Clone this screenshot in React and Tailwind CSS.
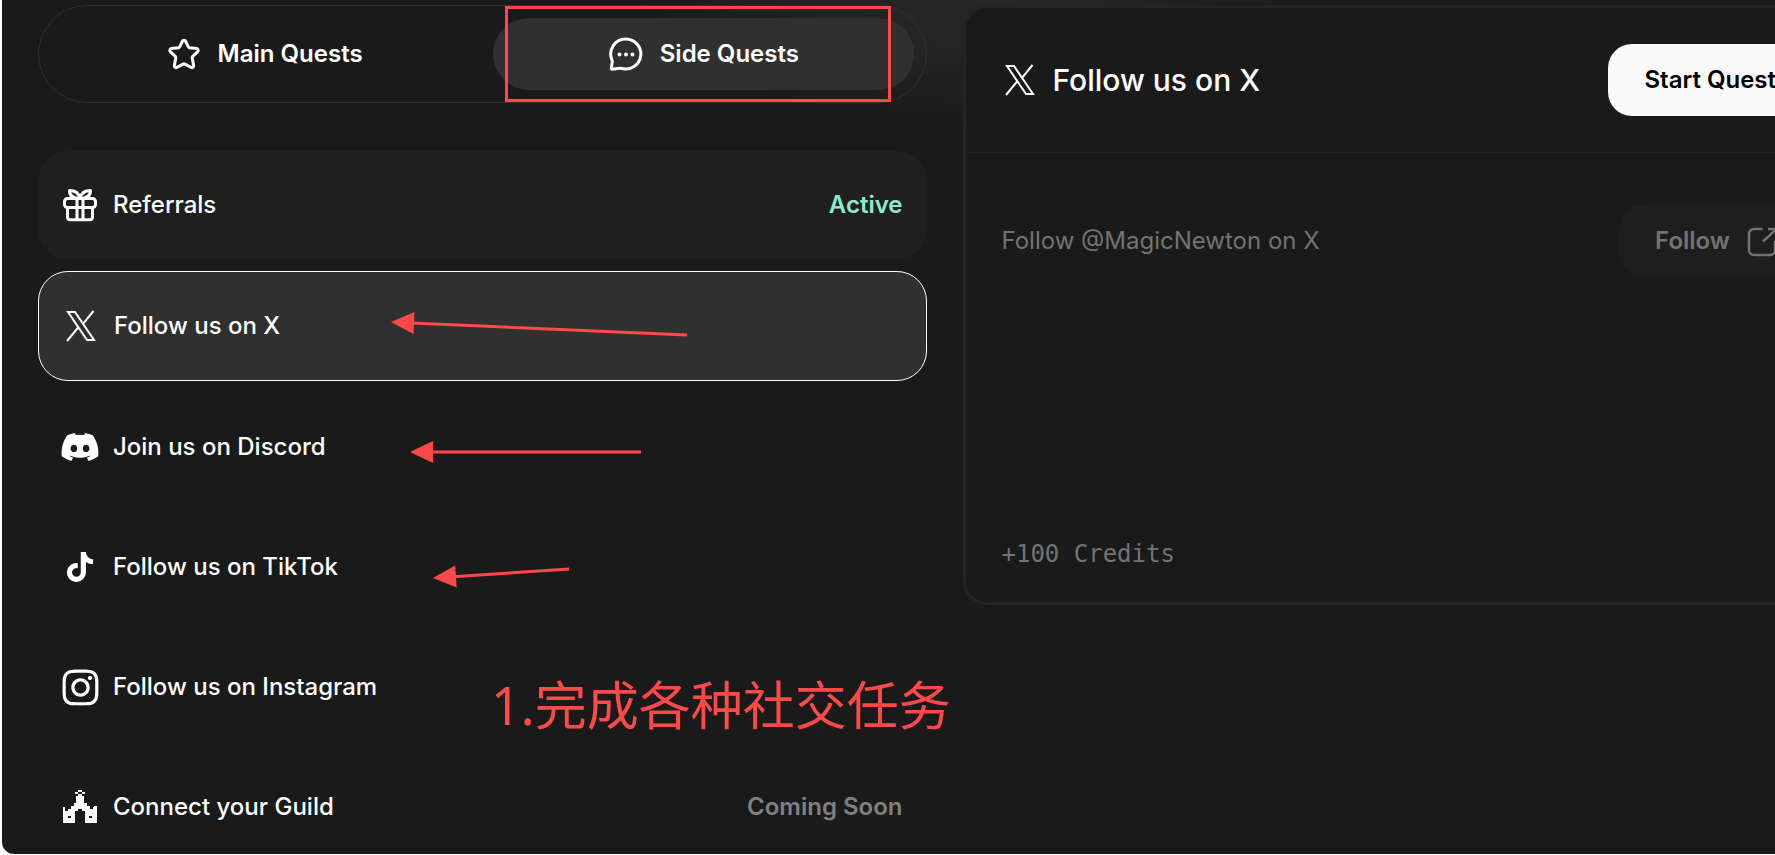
import { useState } from 'react';
import { FaDiscord, FaInstagram, FaTiktok } from 'react-icons/fa6';

const StarIcon = () => (
  <svg width="36" height="36" viewBox="0 0 24 24" fill="none" stroke="currentColor" strokeWidth="2" strokeLinejoin="round">
    <path d="M10.9 3.5c.5-1 1.700-1 2.200 0l1.700 3.600c.2.400.5.600.9.700l4.700.6c1 .1 1.400 1.300.7 2l-3.300 3.200c-.3.300-.4.700-.3 1.100l.9 5c.2 1-.7 1.700-1.600 1.200l-4.200-2.200c-.4-.2-.8-.2-1.200 0l-4.200 2.200c-.9.500-1.800-.2-1.600-1.200l.9-5c.1-.4 0-.8-.3-1.100L2.900 10.400c-.7-.7-.3-1.900.7-2l4.700-.6c.4-.1.700-.3.9-.7z" />
  </svg>
);

const ChatIcon = () => (
  <svg width="36" height="36" viewBox="0 0 36 36" fill="none" stroke="currentColor" strokeWidth="3" strokeLinejoin="round">
    <path d="M18 3a15 15 0 1 1-4 29.500c-1-.3-2-.4-3-.2l-6.500.9c-.8.100-1.300-.4-1.200-1.200l.9-5.500c.1-.9 0-1.800-.3-2.700A15 15 0 0 1 18 3z" />
    <g fill="currentColor" stroke="none">
      <circle cx="11.500" cy="18.500" r="2" />
      <circle cx="18" cy="18.500" r="2" />
      <circle cx="24.500" cy="18.500" r="2" />
    </g>
  </svg>
);

const GiftIcon = () => (
  <svg width="36" height="36" viewBox="0 0 36 36" fill="none" stroke="currentColor" strokeWidth="3" strokeLinejoin="round">
    <rect x="2.500" y="11.500" width="31" height="9" rx="3" />
    <path d="M5.500 20.500v9.500c0 1.700 1 2.700 2.700 2.700h19.600c1.700 0 2.700-1 2.700-2.700v-9.500M15 12v21M21 12v21" />
    <path d="M18 11.500c-1-5-4.500-8-10.500-8C7.500 8.500 11 11.500 18 11.500zM18 11.500c1-5 4.500-8 10.500-8C28.500 8.500 25 11.500 18 11.500z" />
  </svg>
);

const XIcon = () => (
  <svg width="36" height="36" viewBox="0 0 36 36" fill="none" stroke="currentColor" strokeWidth="2">
    <path d="M5 4h7l19 28h-7zM30.500 3L19.500 16.500M4 33L16 18.500" />
  </svg>
);

const GuildIcon = () => (
  <svg width="36" height="36" viewBox="0 0 36 36" fill="currentColor" fillRule="evenodd" shapeRendering="crispEdges">
    <path d="M16 1h4v2h-4zM13 3h3v2h-3zM20 3h3v2h-3zM16 5h4v2h2v7h3v3h3v3h3v-2h1v-1h3v17H23V22h-3v-2h-4v2h-3v12H1V18h2v4h3v-2h3v-3h3v-3h2V7h2zM6 27v2h3v-2zM27 27v2h3v-2z" />
  </svg>
);

const ExternalIcon = () => (
  <svg width="36" height="36" viewBox="0 0 36 36" fill="none" stroke="currentColor" strokeWidth="2.500">
    <path d="M18.500 6H10a5 5 0 0 0-5 5v16a5 5 0 0 0 5 5h16a5 5 0 0 0 5-5v-9M24 6h8.500v8.500M32.500 6L19 18.500" strokeLinejoin="round" />
  </svg>
);

const quests = [
  { id: 'referrals', title: 'Referrals', icon: <GiftIcon />, status: 'Active' },
  { id: 'x', title: 'Follow us on X', icon: <XIcon /> },
  { id: 'discord', title: 'Join us on Discord', icon: <FaDiscord size={40} className="shrink-0" /> },
  { id: 'tiktok', title: 'Follow us on TikTok', icon: <FaTiktok size={30} className="shrink-0" /> },
  { id: 'instagram', title: 'Follow us on Instagram', icon: <FaInstagram size={41} className="shrink-0" /> },
  { id: 'guild', title: 'Connect your Guild', icon: <GuildIcon />, status: 'Coming Soon' },
];

const QuestRow = ({ quest, selected, onSelect }) => {
  let look = '';
  if (selected) look = 'border border-white bg-[#303030]';
  else if (quest.status === 'Active') look = 'bg-[#1f1f1f]';

  return (
    <button
      type="button"
      onClick={onSelect}
      className={`flex w-full items-center rounded-[30px] px-6 py-9 text-left text-2xl leading-9 font-medium ${look}`}
    >
      <span className="mr-[15px] flex size-9 items-center justify-center">{quest.icon}</span>
      <span className="flex-1">{quest.title}</span>
      {quest.status && (
        <span className={quest.status === 'Active' ? 'font-semibold text-[#8ceacb]' : 'font-semibold text-[#808080]'}>
          {quest.status}
        </span>
      )}
    </button>
  );
};

const Arrow = ({ x1, y1, x2, y2 }) => {
  // head is drawn at the (x2, y2) end, pointing along the line
  const angle = (Math.atan2(y2 - y1, x2 - x1) * 180) / Math.PI;
  const length = Math.hypot(x2 - x1, y2 - y1);
  return (
    <g transform={`translate(${x2} ${y2}) rotate(${angle})`} fill="#ff4848">
      <path d="M0 0L-23 -11V11z" />
      <rect x={-length} y="-1.500" width={length - 20} height="3" />
    </g>
  );
};

const Annotations = () => (
  <div className="pointer-events-none absolute inset-0 font-['Noto_Sans','Noto_Sans_CJK_SC',sans-serif]">
    <div className="absolute top-1.5 left-[505px] h-24 w-[386px] border-3 border-[#ff4848]" />
    <svg className="absolute inset-0 size-full">
      <Arrow x1={687} y1={335} x2={391} y2={322} />
      <Arrow x1={641} y1={452} x2={410} y2={452} />
      <Arrow x1={569} y1={569} x2={433} y2={578} />
    </svg>
    <p className="absolute top-[667px] left-[491px] text-[52px] leading-[76px] whitespace-nowrap text-[#ff4848]">
      1.完成各种社交任务
    </p>
  </div>
);

const App = () => {
  const [tab, setTab] = useState('side');
  const [selected, setSelected] = useState('x');

  const tabClass = (name) =>
    `flex flex-auto items-center justify-center gap-4 rounded-full py-[18px] ${tab === name ? 'bg-[#303030]' : ''}`;

  return (
    <div className="relative h-screen overflow-hidden bg-white pb-px pl-0.5 font-[Inter,sans-serif] text-white">
      <main className="h-full overflow-hidden rounded-bl-xl bg-[#1a1a1a] bg-[radial-gradient(340px_130px_at_980px_0px,#262626_0%,#242424_40%,#1a1a1a_100%)]">
        {/* second column runs past the window edge */}
        <div className="-mr-[76px] ml-9 grid grid-cols-2 items-start gap-9 pt-[5px]">

          <section>
            <div className="mb-12 flex gap-4 rounded-full border border-[#303030] p-3 text-2xl leading-9 font-semibold">
              <button type="button" className={tabClass('main')} onClick={() => setTab('main')}>
                <StarIcon />
                Main Quests
              </button>
              <button type="button" className={tabClass('side')} onClick={() => setTab('side')}>
                <ChatIcon />
                Side Quests
              </button>
            </div>

            <div className="space-y-3">
              {quests.map((quest) => (
                <QuestRow
                  key={quest.id}
                  quest={quest}
                  selected={selected === quest.id}
                  onSelect={() => setSelected(quest.id)}
                />
              ))}
            </div>
          </section>

          <section className="flex h-[600px] flex-col rounded-3xl border-3 border-[#242424] bg-[#1a1a1a]">
            <div className="flex items-center gap-[15px] border-b border-[#242424] p-9">
              <XIcon />
              <h2 className="flex-1 text-3xl leading-9 font-medium">Follow us on X</h2>
              <button type="button" className="rounded-3xl bg-[#fafafa] px-9 py-[18px] text-2xl leading-9 font-semibold text-black">
                Start Quest
              </button>
            </div>

            <div className="flex flex-1 flex-col justify-between px-9 pt-[52px] pb-[30px] text-2xl leading-9 text-[#737373]">
              <div className="flex items-center justify-between">
                <p>Follow @MagicNewton on X</p>
                <button type="button" className="flex items-center gap-3.5 rounded-3xl bg-[#1e1e1e] py-[18px] pr-8 pl-9 font-semibold">
                  Follow
                  <ExternalIcon />
                </button>
              </div>
              <p className="font-['DejaVu_Sans_Mono',monospace]">+100 Credits</p>
            </div>
          </section>

        </div>
      </main>
      <Annotations />
    </div>
  );
};

export default App;
